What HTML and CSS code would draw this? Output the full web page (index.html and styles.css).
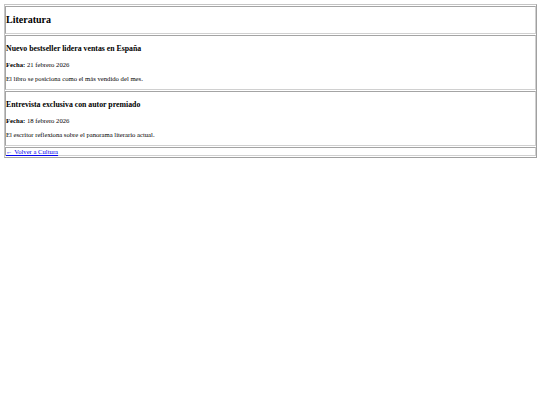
FILE: index.html
```html
<!DOCTYPE html>
<html lang="es">
<head>
<meta charset="utf-8">
<title>Literatura</title>
<link rel="stylesheet" href="styles.css">
</head>
<body>
<table class="page">
  <tr><td class="cell"><h2 class="title">Literatura</h2></td></tr>
  <tr><td class="cell">
    <h3 class="headline">Nuevo bestseller lidera ventas en España</h3>
    <p class="text"><strong>Fecha:</strong> 21 febrero 2026</p>
    <p class="text">El libro se posiciona como el más vendido del mes.</p>
  </td></tr>
  <tr><td class="cell">
    <h3 class="headline">Entrevista exclusiva con autor premiado</h3>
    <p class="text"><strong>Fecha:</strong> 18 febrero 2026</p>
    <p class="text">El escritor reflexiona sobre el panorama literario actual.</p>
  </td></tr>
  <tr><td class="cell"><a class="back" href="#">&larr; Volver a Cultura</a></td></tr>
</table>
</body>
</html>
```

FILE: styles.css
```css
html, body {
  background: #ffffff;
}
body {
  margin: 3.5px;
  font-family: "Liberation Serif", "Times New Roman", serif;
  font-size: 6.67px;
  color: #000000;
}
.page {
  width: 100%;
  border: 1px solid #c4c4c4;
  border-right-color: #a0a0a0;
  border-bottom-color: #a0a0a0;
  border-spacing: 0 1px;
}
.cell {
  font-size: 6.67px;
  border: 1px solid #a4a4a4;
  border-right-color: #d0d0d0;
  border-bottom-color: #d0d0d0;
  padding: 0 0.5px;
  vertical-align: middle;
  text-align: left;
}
.title {
  font-size: 10px;
  font-weight: bold;
  margin: 7.8px 0;
}
.headline {
  font-size: 7.8px;
  font-weight: bold;
  margin: 7.8px 0;
}
.text {
  font-size: 6.67px;
  margin: 7.3px 0;
}
.back {
  font-size: 6.67px;
  color: #0000ee;
  text-decoration: underline;
}
```
